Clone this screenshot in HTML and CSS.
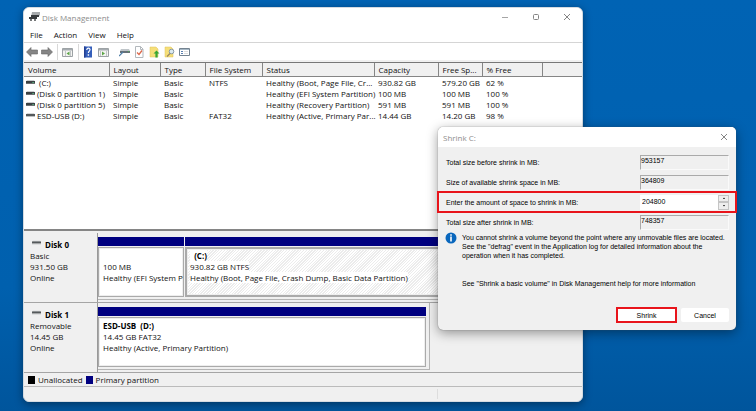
FILE: index.html
```html
<!DOCTYPE html>
<html lang="en">
<head>
<meta charset="utf-8">
<title>Disk Management</title>
<link rel="stylesheet" href="styles.css">
</head>
<body>
<svg class="defs" aria-hidden="true">
  <symbol id="drive" viewBox="0 0 10 6"><path d="M1 1h8l1 2H0z" fill="#b9bcbe"/><path d="M0 2h10v3H0z" fill="#3c4143"/><path d="M7 3h2v1H7z" fill="#55a878"/></symbol>
  <symbol id="drive-gray" viewBox="0 0 10 6"><path d="M1 1h8l1 2H0z" fill="#c9cbcc"/><path d="M0 2h10v2H0z" fill="#55595b"/><path d="M0 4h10v1H0z" fill="#a9acae"/></symbol>
  <symbol id="close" viewBox="0 0 8 8"><path d="M1 1l6 6M7 1L1 7" stroke="#858585" fill="none"/></symbol>
</svg>
<main class="window">
  <header class="titlebar">
    <svg class="app-icon" viewBox="0 0 11 10"><path d="M3 0h8v3L9 5H2z" fill="#a8abad"/><path d="M2 3h8v2H2zM0 5h8v2H0z" fill="#383b3d"/><path d="M1 7h2v2H1zM5 7h2v2H5z" fill="#77797a"/></svg>
    <h1>Disk Management</h1>
    <div class="controls">
      <button aria-label="Minimize"><svg viewBox="0 0 8 8"><path d="M1 4.500h6" stroke="#a5a5a5"/></svg></button>
      <button aria-label="Maximize"><svg viewBox="0 0 8 8"><rect x="1.500" y="1.500" width="5" height="5" rx="1" fill="none" stroke="#858585"/></svg></button>
      <button aria-label="Close"><svg><use href="#close"/></svg></button>
    </div>
  </header>
  <nav class="menu"><button>File</button><button>Action</button><button>View</button><button>Help</button></nav>
  <div class="toolbar">
    <button aria-label="Back"><svg viewBox="0 0 12 12"><path d="M.5 6L5 1.500v2.500h6.500v4H5v2.500z" fill="#858585" stroke="#666" stroke-width=".6"/></svg></button>
    <button aria-label="Forward"><svg viewBox="0 0 12 12"><path d="M11.500 6L7 1.500v2.500H.5v4H7v2.500z" fill="#858585" stroke="#666" stroke-width=".6"/></svg></button>
    <i></i>
    <button aria-label="Console tree"><svg viewBox="0 0 12 12"><path d="M.5 2.500h10v8H.5z" fill="#f4f4f2" stroke="#9da2a5"/><path d="M1 3h9v1.500H1z" fill="#a5abb0"/><path d="M3.500 5v5M8.500 5v5" stroke="#c2c6c8"/><path d="M7.500 5.500v4L4.500 7.500z" fill="#5da648"/></svg></button>
    <i></i>
    <button aria-label="Help"><svg viewBox="0 0 12 12"><path d="M1 .5h8v11H1z" fill="#355fba"/><path d="M1 .5h1.500v11H1z" fill="#233f91"/><path d="M3.800 4c0-2.500 3.400-2.200 3.200-.2C6.900 5.200 5.400 5.200 5.400 7" fill="none" stroke="#fff" stroke-width="1.200"/><path d="M4.700 8.300h1.400v1.400H4.700z" fill="#fff"/></svg></button>
    <button aria-label="Action pane"><svg viewBox="0 0 12 12"><path d="M.5 2.500h10v8H.5z" fill="#f4f4f2" stroke="#9da2a5"/><path d="M1 3h9v1.500H1z" fill="#a5abb0"/><path d="M2.500 5v5M8.500 5v5" stroke="#c2c6c8"/><path d="M4 5.500v4L7 7.500z" fill="#5da648"/></svg></button>
    <i class="blank"></i>
    <button aria-label="Connect"><svg viewBox="0 0 12 12"><path d="M2 3h8l1 2H1z" fill="#bfc5c9"/><path d="M1 5h10v2H1z" fill="#667078"/><path d="M4 6L0 10" stroke="#4f7ea8" stroke-width="1.200"/><path d="M9 5h1v1H9z" fill="#4fae55"/></svg></button>
    <button aria-label="Check"><svg viewBox="0 0 12 12"><path d="M1.500.5h5l2.500 2.500v8.500H1.500z" fill="#fff" stroke="#b3b8bc"/><path d="M6.500.5v3H9" fill="none" stroke="#b3b8bc"/><path d="M3 6.500l2 2 3-4" fill="none" stroke="#dd684b" stroke-width="1.300"/></svg></button>
    <button aria-label="Up"><svg viewBox="0 0 12 12"><path d="M1 1h6l2 2v8H1z" fill="#f6df79" stroke="#dec05b" stroke-width=".5"/><path d="M7.500 4.500l3 3H8.600v4H6.400v-4H4.500z" fill="#38a635"/></svg></button>
    <button aria-label="Find"><svg viewBox="0 0 12 12"><path d="M1 1h6l2 2v8H1z" fill="#f6df79" stroke="#dec05b" stroke-width=".5"/><circle cx="7.500" cy="5.500" r="2.300" fill="#dceaf0" stroke="#8799a5"/><path d="M6 7.500l-3 3" stroke="#9a8860" stroke-width="1.200"/></svg></button>
    <button aria-label="Properties"><svg viewBox="0 0 12 12"><path d="M.5 2.500h10v7H.5z" fill="#fff" stroke="#748390"/><path d="M1 3h9v1H1z" fill="#a5b7c5"/><path d="M2 5.500h2M2 7.500h2" stroke="#5a7fae"/><path d="M5 5.500h4M5 7.500h4" stroke="#ddd"/></svg></button>
  </div>
  <section class="volumes">
    <table>
      <colgroup><col class="c-volume"><col class="c-layout"><col class="c-type"><col class="c-fs"><col class="c-status"><col class="c-cap"><col class="c-free"><col class="c-pct"><col></colgroup>
      <thead><tr><th>Volume</th><th>Layout</th><th>Type</th><th>File System</th><th>Status</th><th>Capacity</th><th>Free Sp...</th><th>% Free</th><th></th></tr></thead>
      <tbody>
        <tr><td><svg><use href="#drive"/></svg>&nbsp;(C:)</td><td>Simple</td><td>Basic</td><td>NTFS</td><td>Healthy (Boot, Page File, Cr...</td><td>930.82 GB</td><td>579.20 GB</td><td>62 %</td><td></td></tr>
        <tr><td><svg><use href="#drive"/></svg>(Disk 0 partition 1)</td><td>Simple</td><td>Basic</td><td></td><td>Healthy (EFI System Partition)</td><td>100 MB</td><td>100 MB</td><td>100 %</td><td></td></tr>
        <tr><td><svg><use href="#drive"/></svg>(Disk 0 partition 5)</td><td>Simple</td><td>Basic</td><td></td><td>Healthy (Recovery Partition)</td><td>591 MB</td><td>591 MB</td><td>100 %</td><td></td></tr>
        <tr><td><svg><use href="#drive-gray"/></svg>ESD-USB (D:)</td><td>Simple</td><td>Basic</td><td>FAT32</td><td>Healthy (Active, Primary Par...</td><td>14.44 GB</td><td>14.20 GB</td><td>98 %</td><td></td></tr>
      </tbody>
    </table>
  </section>
  <section class="disks">
    <article class="disk">
      <div class="info"><h2><svg><use href="#drive-gray"/></svg>Disk 0</h2><p>Basic</p><p>931.50 GB</p><p>Online</p></div>
      <div class="parts">
        <div class="part efi"><div class="box"><p>&nbsp;</p><p>100 MB</p><p>Healthy (EFI System P</p></div></div>
        <div class="part system"><div class="box hatched"><p><b>&nbsp; (C:)</b></p><p><span>930.82 GB NTFS</span></p><p><span>Healthy (Boot, Page File, Crash Dump, Basic Data Partition)</span></p></div></div>
      </div>
    </article>
    <article class="disk">
      <div class="info"><h2><svg><use href="#drive-gray"/></svg>Disk 1</h2><p>Removable</p><p>14.45 GB</p><p>Online</p></div>
      <div class="parts short">
        <div class="part"><div class="box"><p><b>ESD-USB &nbsp;(D:)</b></p><p>14.45 GB FAT32</p><p>Healthy (Active, Primary Partition)</p></div></div>
      </div>
    </article>
  </section>
  <footer class="legend"><span class="swatch black"></span>Unallocated<span class="swatch navy"></span>Primary partition</footer>
  <div class="status"><span></span></div>
</main>
<form class="dialog" role="dialog" aria-labelledby="dialog-title">
  <header><h2 id="dialog-title">Shrink C:</h2><button type="button" aria-label="Close"><svg><use href="#close"/></svg></button></header>
  <div class="field"><label for="before">Total size before shrink in MB:</label><input id="before" value="953157" readonly></div>
  <div class="field"><label for="available">Size of available shrink space in MB:</label><input id="available" value="364809" readonly></div>
  <div class="field marked"><label for="amount">Enter the amount of space to shrink in MB:</label><div class="spin"><input id="amount" value="204800"><div class="arrows"><button type="button" aria-label="Increase"><svg viewBox="0 0 4 3"><path d="M2 .5l1 1.500H1z"/></svg></button><button type="button" aria-label="Decrease"><svg viewBox="0 0 4 3"><path d="M2 2.500l1-1.500H1z"/></svg></button></div></div></div>
  <div class="field"><label for="after">Total size after shrink in MB:</label><input id="after" value="748357" readonly></div>
  <div class="note">
    <svg viewBox="0 0 12 12"><circle cx="6" cy="6" r="5.500" fill="#0967bd"/><path d="M5.200 2.200h1.600v1.600H5.200zM5.200 4.600h1.600v5H5.200z" fill="#fff"/></svg>
    <p>You cannot shrink a volume beyond the point where any unmovable files are located.<br>See the "defrag" event in the Application log for detailed information about the<br>operation when it has completed.</p>
  </div>
  <p class="see">See "Shrink a basic volume" in Disk Management help for more information</p>
  <div class="actions"><button type="button" class="primary">Shrink</button><button type="button">Cancel</button></div>
</form>
</body>
</html>
```
FILE: styles.css
```css
* { box-sizing: border-box; margin: 0; padding: 0; }
body {
  position: relative;
  min-height: 100vh;
  padding: 7px 173px 9px 23px;
  display: flex;
  background: linear-gradient(#0063b4, #0060ae 70%, #00559c);
  font: 8px/11px "Open Sans", sans-serif;
  color: #111;
}
.defs { display: none; }
button { border: 0; background: none; font: inherit; color: inherit; }
svg { display: block; flex: none; }
h1, h2 { font-size: inherit; font-weight: normal; }
.window {
  flex: 1;
  min-width: 0;
  display: flex;
  flex-direction: column;
  background: #f0f0f0;
  border: 1px solid #d5dbe1;
  border-radius: 6px;
  overflow: hidden;
  box-shadow: 0 2px 8px #0006;
}
.titlebar { display: flex; align-items: center; height: 18px; padding-left: 5px; gap: 2px; background: #fff; color: #8c8c8c; }
.app-icon { width: 11px; height: 10px; }
.controls { margin-left: auto; display: flex; }
.controls button { width: 31px; height: 18px; display: grid; place-items: center; }
.controls svg, .dialog header svg { width: 8px; height: 8px; }
.menu { display: flex; gap: 11px; height: 17px; padding: 1px 6px; background: #fff; border-bottom: 1px solid #d5d5d5; }
.toolbar { display: flex; align-items: center; gap: 3px; height: 17px; padding: 0 2px; background: #fff; }
.toolbar svg { width: 12px; height: 12px; }
.toolbar i { width: 1px; height: 16px; margin: 0 1px; background: #d8d8d8; }
.toolbar .blank { background: none; }
.volumes { height: 169px; margin-top: 2px; background: #fff; border-top: 1px solid #777; border-bottom: 2px solid #858585; }
table { width: 100%; table-layout: fixed; border-collapse: collapse; }
th, td { height: 11px; padding: 0 0 0 4px; text-align: left; font-weight: normal; white-space: nowrap; line-height: 11px; }
th { height: 13px; background: #f0f0f0; border-right: 1px solid #858585; border-bottom: 1px solid #858585; line-height: 13px; }
th:last-child { border-right: 0; }
td:first-child { padding-left: 2px; }
td svg { display: inline-block; width: 9px; height: 6px; margin-right: 2px; vertical-align: 1px; }
.c-volume { width: 85px; }
.c-layout { width: 51px; }
.c-type { width: 45px; }
.c-fs { width: 57px; }
.c-status { width: 112px; }
.c-cap { width: 64px; }
.c-free { width: 44px; }
.c-pct { width: 60px; }
.disks { display: flex; flex-direction: column; padding-top: 2px; }
.disk { display: flex; height: 70px; border-bottom: 1px solid #a5a5a5; }
.info { flex: none; width: 74px; padding: 6px; border-right: 1px solid #999; }
.info h2 { display: flex; gap: 4px; padding-left: 2px; font-weight: bold; color: #000; }
.info svg { width: 9px; height: 7px; }
.parts { flex: 1; min-width: 0; display: flex; gap: 1px; padding-top: 4px; margin-bottom: 2px; border-bottom: 1px solid #b5b5b5; }
.parts.short { flex: none; width: 332px; padding-right: 3px; border-right: 1px solid #b5b5b5; }
.part { flex: 1; min-width: 0; display: flex; flex-direction: column; border-top: 9px solid navy; }
.efi { flex: none; width: 86px; }
.box { flex: 1; margin: 1px 0 2px; padding: 2px 4px; background: #fff; border: 1px solid #aaa; box-shadow: inset 0 0 0 1px #eee; white-space: nowrap; overflow: hidden; }
.efi .box { padding-right: 0; }
.hatched { background: repeating-linear-gradient(135deg, #fff 0 1px, #ececec 1px 2px); border: 2px solid #aaa; padding: 1px 3px; }
.hatched span, .hatched b { background: #fff; }
.box b { color: #000; }
.legend { display: flex; align-items: center; gap: 3px; height: 14px; padding-left: 4px; border-bottom: 1px solid #bbb; }
.swatch { width: 7px; height: 8px; }
.black { background: #000; }
.navy { background: navy; }
.status { flex: 1; padding: 2px 0; display: flex; }
.status span { width: 414px; border-right: 1px solid #ddd; }
.dialog {
  position: absolute;
  top: 127px;
  right: 20px;
  width: 298px;
  padding-bottom: 7px;
  background: #f0f0f0;
  border-radius: 5px;
  box-shadow: 0 0 1px #555, 0 3px 12px #0006;
  font: 7px/9px "Liberation Sans", sans-serif;
  color: #000;
}
.dialog header { display: flex; align-items: center; justify-content: space-between; height: 20px; margin-bottom: 5px; padding: 0 8px 0 5px; background: #fff; border-radius: 5px 5px 0 0; font: 8px/11px "Open Sans", sans-serif; color: #8c8c8c; }
.field { display: flex; align-items: center; justify-content: space-between; height: 20px; padding: 0 7px 0 8px; }
.field input { width: 89px; height: 15px; padding: 0 1px 4px 0; border: 1px solid #fafafa; border-top-color: #aaa; border-left-color: #aaa; background: transparent; font: inherit; color: inherit; outline: 0; }
.marked { outline: 2px solid #e8141b; outline-offset: -1px; }
.spin { display: flex; width: 89px; height: 15px; background: #fff; }
.field .spin input { flex: 1; min-width: 0; border: 0; padding: 0 2px 2px; }
.arrows { display: flex; flex-direction: column; width: 11px; }
.arrows button { flex: 1; display: grid; place-items: center; border: 1px solid #c5c5c5; background: #eee; }
.arrows svg { width: 4px; height: 3px; }
.note { display: flex; gap: 5px; padding: 0 7px; }
.note svg { width: 12px; height: 12px; }
.note p { padding-top: 1px; white-space: nowrap; }
.see { margin: 19px 0 0 24px; }
.actions { display: flex; justify-content: flex-end; align-items: center; gap: 4px; margin-top: 19px; padding-right: 7px; }
.actions button { width: 48px; height: 14px; background: #fff; border-radius: 2px; }
.actions .primary { width: 61px; height: 16px; border: 2px solid #e8141b; border-radius: 0; }
```
